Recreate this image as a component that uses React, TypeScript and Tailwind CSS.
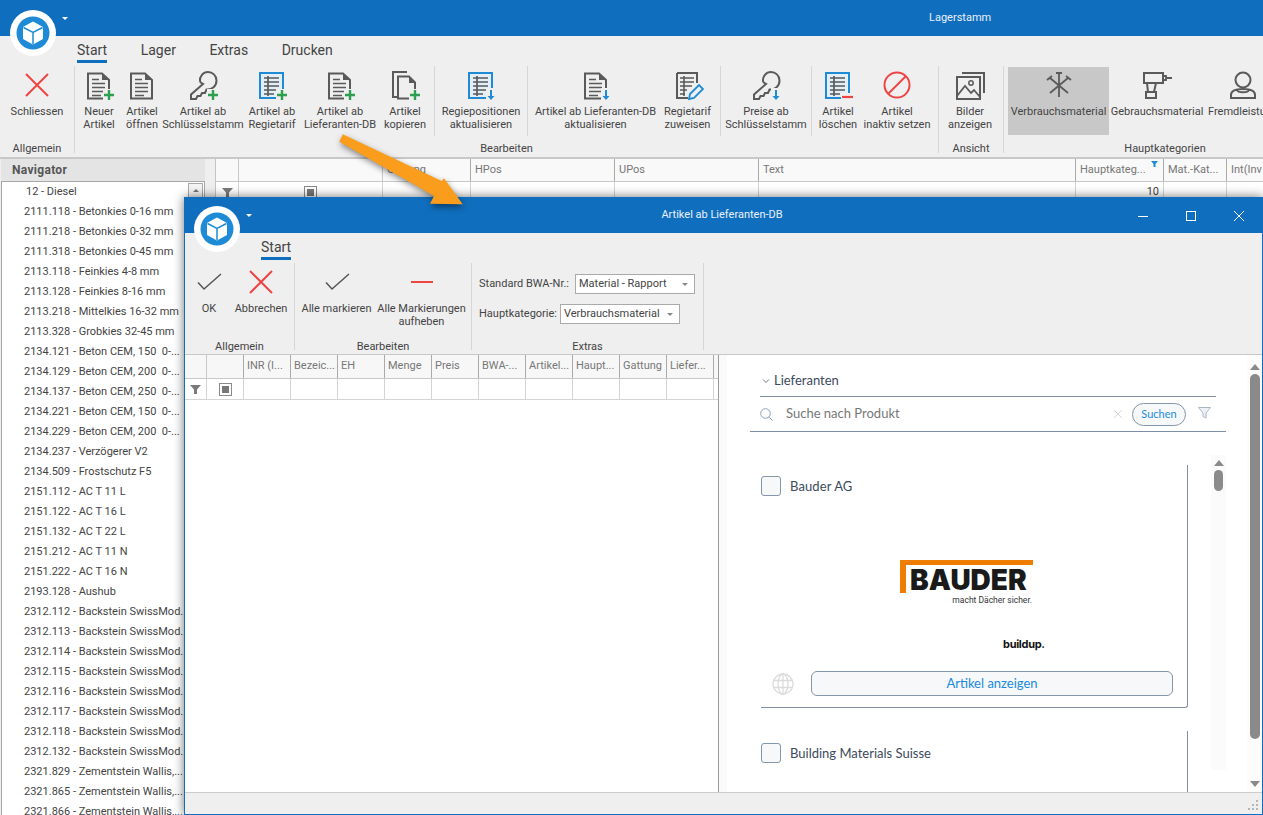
import React from "react";

const GR = "#2e9e4f", BL = "#1f8ad6", RD = "#ef4444", DK = "#5a5a5a";

const Plus = () => (<g><rect x="20" y="20" width="12" height="12" fill="#efefef" /><path d="M26 21v10M21 26h10" stroke={GR} strokeWidth="2.4" /></g>);
const Down = () => (<g><rect x="21" y="19" width="10" height="13" fill="#efefef" /><path d="M26 21v8" stroke={BL} strokeWidth="2" /><path d="M22.5 27l3.5 4 3.5-4z" fill={BL} /></g>);
const Minus = () => (<g><rect x="19" y="24" width="13" height="7" fill="#efefef" /><path d="M20 28h11" stroke={RD} strokeWidth="2.2" /></g>);

const Svg = ({ children, s = 32 }: { children: React.ReactNode; s?: number }) => (
  <svg width={s} height={s} viewBox="0 0 32 32" fill="none">{children}</svg>
);
const Doc = () => (
  <g>
    <path d="M5 4.5H19L26 11V29.5H5Z" stroke={DK} strokeWidth="2" />
    <path d="M19 4v7h7z" fill={DK} />
    <path d="M9 10.5h7M9 14.5h13M9 18.5h13M9 22.5h13M9 26.5h9" stroke={DK} strokeWidth="1.6" />
  </g>
);
const Key = () => (
  <path d="M16 15L4 25.5V30H9L10.5 27H13.5L15 24H18L19.5 20.5C25 21 29.5 17 29.5 11.5C29.5 6.5 25.5 3 21 3C16 3 12.5 7.500 13 12C13 13 15 14.500 16 15Z" stroke={DK} strokeWidth="2" />
);
const Regie = () => (
  <g>
    <rect x="4" y="4" width="23" height="25" stroke={BL} strokeWidth="2" fill="#e3eef7" />
    <path d="M8 9h15M8 13h15M8 17h15M8 21h15M8 25h10M12 7v20" stroke={DK} strokeWidth="1.7" />
  </g>
);
const Icons: Record<string, React.ReactNode> = {
  close: <Svg><path d="M5 5L27 27M27 5L5 27" stroke={RD} strokeWidth="2" /></Svg>,
  docPlus: <Svg><Doc /><Plus /></Svg>,
  doc: <Svg><Doc /></Svg>,
  keyPlus: <Svg><Key /><Plus /></Svg>,
  regiePlus: <Svg><Regie /><Plus /></Svg>,
  copyPlus: <Svg><path d="M8 28H4V3H18" stroke={DK} strokeWidth="2" /><path d="M9 7.500H20L26 13.500V29.500H9Z" stroke={DK} strokeWidth="2" /><path d="M20 7v7h6z" fill={DK} /><Plus /></Svg>,
  regieDown: <Svg><Regie /><Down /></Svg>,
  docDown: <Svg><Doc /><Down /></Svg>,
  pencil: <Svg><path d="M5 4H25V14M16 29H5V4" stroke={DK} strokeWidth="2" /><path d="M8 9h14M8 13h14M8 17h12M8 21h7M8 25h5M12 7v20" stroke={DK} strokeWidth="1.6" /><path d="M17 30l1-5 9-9 4 4-9 9z" stroke={BL} strokeWidth="1.8" fill="#efefef" /></Svg>,
  keyDown: <Svg><Key /><Down /></Svg>,
  regieMinus: <Svg><Regie /><Minus /></Svg>,
  ban: <Svg><circle cx="16" cy="16" r="12.500" stroke={RD} strokeWidth="2" /><path d="M25 7L7 25" stroke={RD} strokeWidth="2" /></Svg>,
  images: <Svg><path d="M8 4H30V24" stroke={DK} strokeWidth="2" /><rect x="3" y="8" width="23" height="22" stroke={DK} strokeWidth="2" /><circle cx="17" cy="14" r="2.200" stroke={DK} strokeWidth="1.500" /><path d="M3 27L11 17L17 24L20 21L26 28" stroke={DK} strokeWidth="1.800" /></Svg>,
  screw: <Svg><path d="M16 4V28M13 4h6M7 9L25 24M25 9L7 24M4 11l5-4M23 7l5 4" stroke={DK} strokeWidth="1.800" /></Svg>,
  drill: <Svg><path d="M3 4H22V14H3ZM6 14H15L13 23H7ZM5 23H15V29H5Z" stroke={DK} strokeWidth="2" /><path d="M22 7h3v4h-3M25 9h6" stroke={DK} strokeWidth="1.800" /></Svg>,
  person: <Svg><circle cx="16" cy="11" r="7.500" stroke={DK} strokeWidth="2" /><path d="M4 29V26C4 22 9 20 16 20S28 22 28 26V29ZM10 21c1 3 11 3 12 0" stroke={DK} strokeWidth="2" /></Svg>,
  check: <Svg><path d="M5 16.500L11 23L28 8" stroke="#555" strokeWidth="1.500" /></Svg>,
  minus: <Svg><path d="M5 16H27" stroke={RD} strokeWidth="2" /></Svg>,
};

const Logo = () => (
  <svg width="46" height="46" viewBox="0 0 46 46">
    <circle cx="23" cy="23" r="23" fill="#fff" />
    <circle cx="23" cy="23" r="16.500" fill={BL} />
    <path d="M23 11.500L33 17V29L23 34.500L13 29V17Z" fill="#fff" />
    <path d="M13.500 17.500L23 22.500L32.500 17.500M23 22.500V34" stroke={BL} strokeWidth="1.500" fill="none" />
  </svg>
);
const Caret = () => <div className="w-0 h-0 border-l-[3px] border-r-[3px] border-t-[3px] border-l-transparent border-r-transparent border-t-white" />;

const Btn = ({ w, icon, lines, active }: { w: string; icon: string; lines: string[]; active?: boolean }) => (
  <div className={`${w} h-[68px] mt-px shrink-0 flex flex-col items-center pt-[2px] ${active ? "bg-[#c8c8c8]" : ""}`}>
    <div className="h-[32px]">{Icons[icon]}</div>
    <div className="mt-[4px] text-center text-[11px] leading-[13px] text-[#444] whitespace-nowrap">
      {lines.map((l) => <div key={l}>{l}</div>)}
    </div>
  </div>
);
const Sep = ({ c = "" }: { c?: string }) => <div className={`w-px h-[70px] bg-[#d6d6d6] shrink-0 ${c}`} />;

const Group = ({ w, label, children, end = true, lc = "mt-[6px]" }: { w: string; label: string; children: React.ReactNode; end?: boolean; lc?: string }) => (
  <div className={`${w} shrink-0 flex flex-col h-[87px] ${end ? "border-r border-[#d6d6d6]" : ""}`}>
    <div className="flex h-[70px] shrink-0">{children}</div>
    <div className={`${lc} shrink-0 text-center text-[11px] leading-[14px] text-[#444]`}>{label}</div>
  </div>
);

const Funnel = () => (
  <svg width="11" height="9" viewBox="0 0 11 9"><path d="M0 0H11L7 4.500V9H4V4.500Z" fill="#7a7a7a" /></svg>
);
const TriBox = () => (
  <div className="w-[13px] h-[13px] border border-[#8a8a8a] bg-white flex items-center justify-center"><div className="w-[7px] h-[7px] bg-[#777]" /></div>
);

const nav = [
  "12 - Diesel", "2111.118 - Betonkies 0-16 mm", "2111.218 - Betonkies 0-32 mm", "2111.318 - Betonkies 0-45 mm",
  "2113.118 - Feinkies 4-8 mm", "2113.128 - Feinkies 8-16 mm", "2113.218 - Mittelkies 16-32 mm", "2113.328 - Grobkies 32-45 mm",
  "2134.121 - Beton CEM, 150  0-...", "2134.129 - Beton CEM, 200  0-...", "2134.137 - Beton CEM, 250  0-...",
  "2134.221 - Beton CEM, 150  0-...", "2134.229 - Beton CEM, 200  0-...", "2134.237 - Verzögerer V2", "2134.509 - Frostschutz F5",
  "2151.112 - AC T 11 L", "2151.122 - AC T 16 L", "2151.132 - AC T 22 L", "2151.212 - AC T 11 N", "2151.222 - AC T 16 N", "2193.128 - Aushub",
  "2312.112 - Backstein SwissMod...", "2312.113 - Backstein SwissMod...", "2312.114 - Backstein SwissMod...", "2312.115 - Backstein SwissMod...",
  "2312.116 - Backstein SwissMod...", "2312.117 - Backstein SwissMod...", "2312.118 - Backstein SwissMod...", "2312.132 - Backstein SwissMod...",
  "2321.829 - Zementstein Wallis,...", "2321.865 - Zementstein Wallis,...", "2321.866 - Zementstein Wallis,...",
];

const mainCols: [string, string][] = [
  ["w-[23px]", ""], ["w-[144px]", ""], ["w-[88px]", "Gattung"], ["w-[144px]", "HPos"], ["w-[144px]", "UPos"], ["w-[317px]", "Text"],
  ["w-[88px]", "Hauptkateg..."], ["w-[63px]", "Mat.-Kat..."], ["w-[60px]", "Int(Inv"],
];
const dlgCols = ["INR (I...", "Bezeic...", "EH", "Menge", "Preis", "BWA-...", "Artikel...", "Haupt...", "Gattung", "Liefer..."];

const Select = ({ w, text }: { w: string; text: string }) => (
  <div className={`${w} h-[20px] bg-white border border-[#aaa] flex items-center justify-between pl-[3px] pr-[6px] text-[11px] text-[#444]`}>
    <span>{text}</span>
    <div className="w-0 h-0 border-l-[3px] border-r-[3px] border-t-[3px] border-l-transparent border-r-transparent border-t-[#888]" />
  </div>
);

const Check = () => <div className="w-[20px] h-[20px] rounded-[3px] border border-[#8496aa] bg-[#f6f8fa] shrink-0" />;
const ScrollUp = () => <div className="w-0 h-0 border-l-[5px] border-r-[5px] border-b-[6px] border-l-transparent border-r-transparent border-b-[#8a8a8a]" />;
const ScrollDown = () => <div className="w-0 h-0 border-l-[5px] border-r-[5px] border-t-[6px] border-l-transparent border-r-transparent border-t-[#8a8a8a]" />;

export default function App() {
  return (
    <div className="relative w-[1263px] h-[815px] overflow-hidden bg-[#efefef] [font-family:Roboto,sans-serif]">
      {/* main window */}
      <div className="h-[36px] bg-[#106ebe] flex items-start pl-[929px] pt-[11px] text-[11px] leading-[14px] text-[#e8f1fa]">Lagerstamm</div>
      <div className="absolute left-[10px] top-[10px]"><Logo /></div>
      <div className="absolute left-[62px] top-[17px]"><Caret /></div>
      <div className="h-[30px] pl-[77px] flex gap-[33.5px] pt-[6px] text-[14px] leading-[17px] text-[#444]">
        <div className="h-[21px] border-b-[3px] border-[#106ebe]">Start</div>
        <div>Lager</div><div>Extras</div><div>Drucken</div>
      </div>
      <div className="h-[91px] flex">
        <Group w="w-[75px]" label="Allgemein"><Btn w="w-[74px]" icon="close" lines={["Schliessen"]} /></Group>
        <Group w="w-[864px]" label="Bearbeiten">
          <div className="w-[2px]" />
          <Btn w="w-[44px]" icon="docPlus" lines={["Neuer", "Artikel"]} />
          <Btn w="w-[42px]" icon="doc" lines={["Artikel", "öffnen"]} />
          <Btn w="w-[80px]" icon="keyPlus" lines={["Artikel ab", "Schlüsselstamm"]} />
          <Btn w="w-[58px]" icon="regiePlus" lines={["Artikel ab", "Regietarif"]} />
          <Btn w="w-[78px]" icon="docPlus" lines={["Artikel ab", "Lieferanten-DB"]} />
          <Btn w="w-[52px]" icon="copyPlus" lines={["Artikel", "kopieren"]} />
          <Sep c="ml-[3px]" />
          <Btn w="w-[92px]" icon="regieDown" lines={["Regiepositionen", "aktualisieren"]} />
          <Sep />
          <Btn w="w-[135px]" icon="docDown" lines={["Artikel ab Lieferanten-DB", "aktualisieren"]} />
          <Btn w="w-[49px]" icon="pencil" lines={["Regietarif", "zuweisen"]} />
          <Sep c="ml-[8px]" />
          <Btn w="w-[90px]" icon="keyDown" lines={["Preise ab", "Schlüsselstamm"]} />
          <Sep />
          <Btn w="w-[52px]" icon="regieMinus" lines={["Artikel", "löschen"]} />
          <Btn w="w-[66px]" icon="ban" lines={["Artikel", "inaktiv setzen"]} />
        </Group>
        <Group w="w-[65px]" label="Ansicht"><Btn w="w-[62px]" icon="images" lines={["Bilder", "anzeigen"]} /></Group>
        <Group w="w-[322px]" label="Hauptkategorien" end={false}>
          <div className="w-[4px]" />
          <Btn w="w-[101px]" icon="screw" lines={["Verbrauchsmaterial"]} active />
          <Btn w="w-[96px]" icon="drill" lines={["Gebrauchsmaterial"]} />
          <Btn w="w-[76px]" icon="person" lines={["Fremdleistung"]} />
        </Group>
      </div>
      <div className="flex border-t-2 border-[#c8c8c8] h-[658px]">
        <div className="w-[205px] pl-px shrink-0">
          <div className="h-[22px] bg-[#e4e4e4] flex items-center pl-[11px] text-[12px] tracking-[0.3px] font-bold text-[#555]">Navigator</div>
          <div className="relative h-[640px] bg-white border border-[#a8a8a8]">
            {nav.map((n, i) => (
              <div key={n} className={`h-[20px] flex items-center text-[11px] text-[#444] whitespace-pre ${i === 0 ? "pl-[24px]" : "pl-[22px]"}`}>{n}</div>
            ))}
            <div className="absolute right-px top-px w-[15px] h-[15px] border border-[#aaa] bg-[#f4f4f4] flex items-center justify-center">
              <div className="w-0 h-0 border-l-[3px] border-r-[3px] border-b-[3px] border-l-transparent border-r-transparent border-b-[#777]" />
            </div>
          </div>
        </div>
        <div className="ml-[10px] flex-1 overflow-hidden border-l border-[#c4c4c4]">
          <div className="flex h-[23px] bg-[#f9f9f9] border-b border-[#c8c8c8]">
            {mainCols.map(([w, t], i) => (
              <div key={i} className={`${w} shrink-0 relative flex items-center pl-[4px] text-[11px] text-[#777] border-r ${i < 2 ? "border-[#c8c8c8]" : "border-[#aaa]"}`}>
                {t}
                {i === 6 && <svg className="absolute right-[5px] top-[2px]" width="7" height="6" viewBox="0 0 7 6"><path d="M0 0H7L4.500 3V6H2.500V3Z" fill={BL} /></svg>}
              </div>
            ))}
          </div>
          <div className="flex h-[20px] bg-white">
            {mainCols.map(([w], i) => (
              <div key={i} className={`${w} shrink-0 border-r border-[#d4d4d4] flex items-center justify-center text-[11px] text-[#444]`}>
                {i === 0 && <Funnel />}
                {i === 1 && <TriBox />}
                {i === 6 && <span className="ml-auto pr-[4px]">10</span>}
              </div>
            ))}
          </div>
        </div>
      </div>

      {/* dialog */}
      <div className="absolute left-[184px] top-[197px] w-[1079px] h-[618px] flex flex-col bg-[#efefef] border border-[#106ebe] shadow-[0_0_10px_rgba(0,0,0,0.55)]">
        <div className="h-[35px] shrink-0 bg-[#106ebe] relative flex items-center justify-end">
          <div className="absolute left-0 right-[3px] top-[10px] text-center text-[11px] leading-[14px] text-[#e8f1fa]">Artikel ab Lieferanten-DB</div>
          {["min", "max", "close"].map((k) => (
            <div key={k} className="w-[48px] h-full flex items-center justify-center translate-x-px">
              <svg width="12" height="12" viewBox="0 0 12 12" fill="none" stroke="#fff" strokeWidth="1">
                {k === "min" && <path d="M1 6.500H11" />}
                {k === "max" && <rect x="1.500" y="1.500" width="9" height="9" />}
                {k === "close" && <path d="M1 1L11 11M11 1L1 11" />}
              </svg>
            </div>
          ))}
        </div>
        <div className="absolute left-[9px] top-[8px]"><Logo /></div>
        <div className="absolute left-[61px] top-[16px]"><Caret /></div>
        <div className="h-[30px] shrink-0 pl-[76px] pt-[6px] text-[14px] leading-[17px] text-[#444]">
          <div className="w-[30px] h-[21px] border-b-[3px] border-[#106ebe]">Start</div>
        </div>
        <div className="h-[92px] shrink-0 flex border-b border-[#c8c8c8]">
          <Group w="w-[110px]" label="Allgemein" lc="mt-[7px]">
            <Btn w="w-[48px]" icon="check" lines={["OK"]} />
            <Btn w="w-[56px]" icon="close" lines={["Abbrechen"]} />
          </Group>
          <Group w="w-[177px]" label="Bearbeiten" lc="mt-[7px]">
            <Btn w="w-[83px]" icon="check" lines={["Alle markieren"]} />
            <Btn w="w-[87px]" icon="minus" lines={["Alle Markierungen", "aufheben"]} />
          </Group>
          <Group w="w-[232px]" label="Extras" lc="mt-[7px]">
            <div className="pl-[7px] pt-[11px] flex flex-col gap-[10px] text-[11px] text-[#444]">
              <div className="flex items-center gap-[3px]"><span className="w-[93px] whitespace-nowrap">Standard BWA-Nr.:</span><Select w="w-[120px]" text="Material - Rapport" /></div>
              <div className="flex items-center gap-[3px]"><span className="w-[78px] whitespace-nowrap">Hauptkategorie:</span><Select w="w-[120px]" text="Verbrauchsmaterial" /></div>
            </div>
          </Group>
        </div>
        <div className="flex-1 flex min-h-0 bg-white">
          {/* dialog grid */}
          <div className="w-[534px] shrink-0 border-r border-[#999] overflow-hidden">
            <div className="flex h-[24px] bg-[#f7f7f7] border-b border-[#c8c8c8]">
              <div className="w-[22px] shrink-0 border-r border-[#c8c8c8]" />
              <div className="w-[37px] shrink-0 border-r border-[#aaa]" />
              {dlgCols.map((c) => (
                <div key={c} className="w-[47px] shrink-0 border-r border-[#aaa] pl-[3px] flex items-center text-[11px] text-[#777] whitespace-nowrap overflow-hidden">{c}</div>
              ))}
            </div>
            <div className="flex h-[21px] border-b border-[#d4d4d4]">
              <div className="w-[22px] shrink-0 border-r border-[#d4d4d4] flex items-center justify-center"><Funnel /></div>
              <div className="w-[37px] shrink-0 border-r border-[#d4d4d4] flex items-center justify-center"><TriBox /></div>
              {dlgCols.map((c) => <div key={c} className="w-[47px] shrink-0 border-r border-[#d4d4d4]" />)}
            </div>
          </div>
          {/* supplier panel */}
          <div className="relative flex-1 flex overflow-hidden [font-family:Lato,sans-serif]">
            <div className="w-[8px] bg-[#fafafa] shrink-0" />
            <div className="ml-[23px] w-[476px] shrink-0 flex flex-col">
              <div className="mx-[10px] h-[42px] shrink-0 border-b border-[#7f8fa3] flex items-center gap-[4px] pt-[11px] text-[13px] text-[#3c4a5c]">
                <svg className="ml-[2px]" width="8" height="6" viewBox="0 0 8 6" fill="none"><path d="M1 1.500L4 4.500L7 1.500" stroke="#6a7a8c" /></svg>
                Lieferanten
              </div>
              <div className="h-[35px] shrink-0 border-b border-[#7f8fa3] relative flex items-center pl-[10px] text-[13px] text-[#777]">
                <svg width="13" height="13" viewBox="0 0 13 13" fill="none" stroke="#8da0b5"><circle cx="5.500" cy="5.500" r="4.800" /><path d="M9 9L12.500 12.500" /></svg>
                <span className="ml-[13px]">Suche nach Produkt</span>
                <svg className="ml-auto" width="10" height="10" viewBox="0 0 10 10" stroke="#d4d8dd"><path d="M1 1L9 9M9 1L1 9" /></svg>
                <div className="ml-[9px] w-[54px] h-[23px] rounded-full border border-[#8496aa] bg-[#f6f8fa] flex items-center justify-center text-[11px] text-[#1a8ae0]">Suchen</div>
                <svg className="ml-[12px] mr-[15px] -mt-[3px]" width="13" height="12" viewBox="0 0 13 12" fill="#eef2f6" stroke="#a9b6c4"><path d="M.5.500H12.500L8 6V11L5 9.500V6Z" /></svg>
              </div>
              <div className="flex-1 flex min-h-0 mt-[23px] pl-[11px]">
                <div className="w-[427px] shrink-0 pt-[10px]">
                  <div className="h-[243px] border-r border-b border-[#7f8fa3] rounded-br-[3px] flex flex-col">
                    <div className="pt-[11px] flex items-center gap-[9px] text-[13px] leading-[18px] text-[#3c4a5c]"><Check /><span className="-mt-px tracking-[0.1px]">Bauder AG</span></div>
                    <div className="ml-[139px] w-[133px] mt-[64px] h-[33px] border-t-[5px] border-l-[6px] border-[#ee7d00] pl-[4px] text-[28px] leading-[30px] font-black text-[#1a1a1a] [font-family:Inter,sans-serif] whitespace-nowrap">BAUDER</div>
                    <div className="ml-[139px] w-[132px] mt-[2px] text-right text-[8.5px] leading-[10px] text-[#333] [font-family:Roboto,sans-serif]">macht Dächer sicher.</div>
                    <div className="ml-[242px] mt-[32px] text-[11px] leading-[14px] font-bold tracking-[-0.3px] text-[#111] [font-family:Inter,sans-serif]">buildup.</div>
                    <div className="mt-[20px] flex items-center">
                      <svg className="ml-[11px]" width="22" height="22" viewBox="0 0 22 22" fill="none" stroke="#dcdcdc" strokeWidth="1.300"><circle cx="11" cy="11" r="10" /><ellipse cx="11" cy="11" rx="5" ry="10" /><path d="M11 1V21M1.500 7.500H20.500M1.500 14.500H20.500" /></svg>
                      <div className="ml-[17px] w-[362px] h-[25px] rounded-[6px] border border-[#8496aa] bg-[#f6f8fa] flex items-center justify-center text-[13px] text-[#1a8ae0]">Artikel anzeigen</div>
                    </div>
                  </div>
                  <div className="mt-[23px] h-[200px] border-r border-[#7f8fa3] pt-[12px]">
                    <div className="flex items-center gap-[9px] text-[13px] leading-[18px] text-[#3c4a5c]"><Check /><span>Building Materials Suisse</span></div>
                  </div>
                </div>
                <div className="ml-[23px] w-[15px] h-[315px] bg-[#fbfbfb] flex flex-col items-center pt-[5px] shrink-0">
                  <ScrollUp />
                  <div className="mt-[4px] w-[9px] h-[21px] rounded-full bg-[#8a8a8a]" />
                </div>
              </div>
            </div>
            <div className="absolute right-0 top-0 bottom-0 w-[15px] bg-[#fcfcfc] flex flex-col items-center pt-[9px]">
              <ScrollUp />
              <div className="mt-[4px] w-[10px] h-[365px] rounded-full bg-[#8a8a8a]" />
              <div className="mt-auto mb-[5px]"><ScrollDown /></div>
            </div>
          </div>
        </div>
        <div className="h-[22px] shrink-0 border-t border-[#ccc] bg-[#efefef] relative">
          <svg className="absolute right-[3px] bottom-[3px]" width="11" height="11" viewBox="0 0 11 11" fill="#b5b5b5">
            <rect x="8" y="0" width="2" height="2" /><rect x="4" y="4" width="2" height="2" /><rect x="8" y="4" width="2" height="2" />
            <rect x="0" y="8" width="2" height="2" /><rect x="4" y="8" width="2" height="2" /><rect x="8" y="8" width="2" height="2" />
          </svg>
        </div>
      </div>

      {/* annotation arrow */}
      <svg className="absolute left-0 top-0 pointer-events-none drop-shadow-[1px_3px_3px_rgba(0,0,0,0.45)]" width="1263" height="815" viewBox="0 0 1263 815">
        <path d="M342.700 134.300L441.700 181L444 178.300L462.700 204.300L430 203.700L434 196L339.300 141.700Z" fill="#fa9d1c" />
      </svg>
    </div>
  );
}
